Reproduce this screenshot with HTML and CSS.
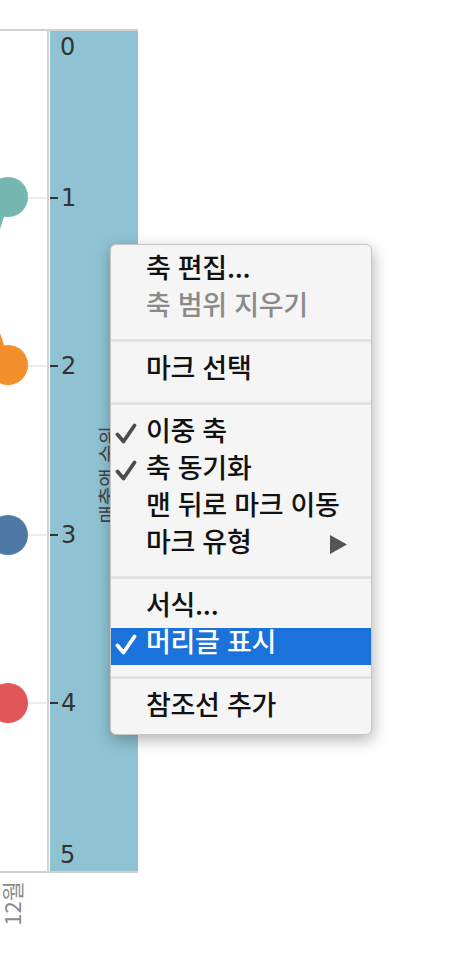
FILE: index.html
```html
<!DOCTYPE html>
<html lang="ko">
<head>
  <meta charset="UTF-8">
  <meta name="viewport" content="width=device-width, initial-scale=1.0">
  <title>축 메뉴</title>
  <link rel="stylesheet" href="styles.css">
</head>
<body>
  <!-- Chart area: left pane with marks, right pane with the axis -->
  <div class="viz">
    <div class="panes">
      <div class="pane-marks">
        <svg class="marks" width="47" height="840" viewBox="0 0 47 840" aria-hidden="true">
          <g class="grid">
            <line x1="8" y1="167" x2="47" y2="167"/>
            <line x1="8" y1="335" x2="47" y2="335"/>
            <line x1="8" y1="504" x2="47" y2="504"/>
            <line x1="8" y1="672" x2="47" y2="672"/>
          </g>
          <line x1="8" y1="166" x2="-20" y2="250" stroke="#76b7b2" stroke-width="5"/>
          <line x1="8" y1="334" x2="-20" y2="250" stroke="#f28e2b" stroke-width="5"/>
          <circle cx="8" cy="166" r="20" fill="#76b7b2"/>
          <circle cx="8" cy="334" r="20" fill="#f28e2b"/>
          <circle cx="8" cy="504" r="20" fill="#4e79a7"/>
          <circle cx="8" cy="672" r="20" fill="#e15759"/>
        </svg>
      </div>

      <div class="pane-axis">
        <span class="tick-label edge" style="top: 16px">0</span>
        <div class="tick" style="top: 167px"><span class="tick-mark"></span><span class="tick-label">1</span></div>
        <div class="tick" style="top: 335px"><span class="tick-mark"></span><span class="tick-label">2</span></div>
        <div class="tick" style="top: 504px"><span class="tick-mark"></span><span class="tick-label">3</span></div>
        <div class="tick" style="top: 672px"><span class="tick-mark"></span><span class="tick-label">4</span></div>
        <span class="tick-label edge" style="top: 824px">5</span>
        <span class="axis-title">매출액 순위</span>
      </div>
    </div>

    <div class="x-labels">
      <span class="x-label">12월</span>
    </div>
  </div>

  <!-- Context menu for the axis -->
  <ul class="menu" role="menu">
    <li class="item" role="menuitem"><span class="check"></span>축 편집...</li>
    <li class="item disabled" role="menuitem" aria-disabled="true"><span class="check"></span>축 범위 지우기</li>
    <li class="sep" role="separator"></li>
    <li class="item" role="menuitem"><span class="check"></span>마크 선택</li>
    <li class="sep" role="separator"></li>
    <li class="item" role="menuitemcheckbox" aria-checked="true">
      <span class="check"><svg width="22" height="21" viewBox="0 0 22 21"><path d="M2.5 11.5 L8.5 18.5 L19.5 2.5"/></svg></span>이중 축
    </li>
    <li class="item" role="menuitemcheckbox" aria-checked="true">
      <span class="check"><svg width="22" height="21" viewBox="0 0 22 21"><path d="M2.5 11.5 L8.5 18.5 L19.5 2.5"/></svg></span>축 동기화
    </li>
    <li class="item" role="menuitem"><span class="check"></span>맨 뒤로 마크 이동</li>
    <li class="item" role="menuitem" aria-haspopup="true">
      <span class="check"></span>마크 유형
      <svg class="submenu" width="17" height="19" viewBox="0 0 17 19"><polygon points="0,0 17,9.5 0,19"/></svg>
    </li>
    <li class="sep" role="separator"></li>
    <li class="item" role="menuitem"><span class="check"></span>서식...</li>
    <li class="item active" role="menuitemcheckbox" aria-checked="true">
      <span class="check"><svg width="22" height="21" viewBox="0 0 22 21"><path d="M2.5 11.5 L8.5 18.5 L19.5 2.5"/></svg></span>머리글 표시
    </li>
    <li class="sep" role="separator"></li>
    <li class="item" role="menuitem"><span class="check"></span>참조선 추가</li>
  </ul>
</body>
</html>
```

FILE: styles.css
```css
/* Page */
body {
  margin: 0;
  background: #fff;
  font-family: "Noto Sans CJK KR", "Noto Sans", sans-serif;
  color: #111;
}

/* Chart panes */
.viz {
  width: 138px;
}

.panes {
  display: flex;
  margin-top: 29px;
  height: 840px;
  border-top: 2px solid #d2d2d2;
  border-bottom: 2px solid #d2d2d2;
}

.pane-marks {
  width: 47px;
  border-right: 2px solid #d2d2d2;
  overflow: hidden;
}

.marks {
  display: block;
  overflow: visible;
}

.grid line {
  stroke: #ececec;
  stroke-width: 2;
}

.pane-axis {
  position: relative;
  width: 88px;
  margin-left: 1px;
  background: #8fc3d3;
  overflow: hidden;
}

/* Axis ticks sit at their scale position */
.tick {
  position: absolute;
  left: 0;
  display: flex;
  align-items: center;
  gap: 3px;
  transform: translateY(-50%);
}

.tick-mark {
  width: 8px;
  height: 2px;
  background: #333;
}

.tick-label {
  font-family: "DejaVu Sans", sans-serif;
  font-size: 24px;
  line-height: 24px;
  color: #333;
}

.tick-label.edge {
  position: absolute;
  left: 10px;
  transform: translateY(-50%);
}

/* Rotated titles read from bottom to top */
.axis-title,
.x-label {
  writing-mode: vertical-rl;
  text-orientation: sideways;
  transform: rotate(180deg);
}

.axis-title {
  position: absolute;
  left: 48px;
  top: 395px;
  font-size: 20px;
  line-height: 20px;
  color: #444;
}

/* Column header under the marks pane */
.x-labels {
  display: flex;
  width: 47px;
  padding-top: 8px;
}

.x-label {
  font-size: 22px;
  line-height: 22px;
  color: #8a8a8a;
}

/* Context menu */
.menu {
  position: absolute;
  left: 110px;
  top: 244px;
  width: 260px;
  margin: 0;
  padding: 9px 0 6px;
  list-style: none;
  background: #f5f5f5;
  border: 1px solid #c6c6c6;
  border-radius: 6px;
  box-shadow: 1px 5px 16px rgba(0, 0, 0, 0.3);
}

.item {
  display: flex;
  align-items: flex-start;
  height: 26px;
  padding-bottom: 11px;
  font-size: 27px;
  font-weight: 500;
  line-height: 26px;
  letter-spacing: -0.3px;
  color: #111;
}

.item.disabled {
  color: #8a8a8a;
}

.item.active {
  background: #1b72da;
  color: #fff;
}

.check {
  flex: none;
  width: 35px;
  height: 26px;
  position: relative;
}

.check svg {
  position: absolute;
  left: 4px;
  top: 6px;
}

.check path {
  fill: none;
  stroke: #4c4c4c;
  stroke-width: 3.8;
  stroke-linecap: round;
  stroke-linejoin: round;
}

.item.active .check path {
  stroke: #fff;
}

.submenu {
  margin-left: auto;
  margin-right: 24px;
  margin-top: 7px;
  fill: #555;
}

.sep {
  height: 3px;
  margin: 11px 0 12px;
  background: #e3e3e3;
}
```
